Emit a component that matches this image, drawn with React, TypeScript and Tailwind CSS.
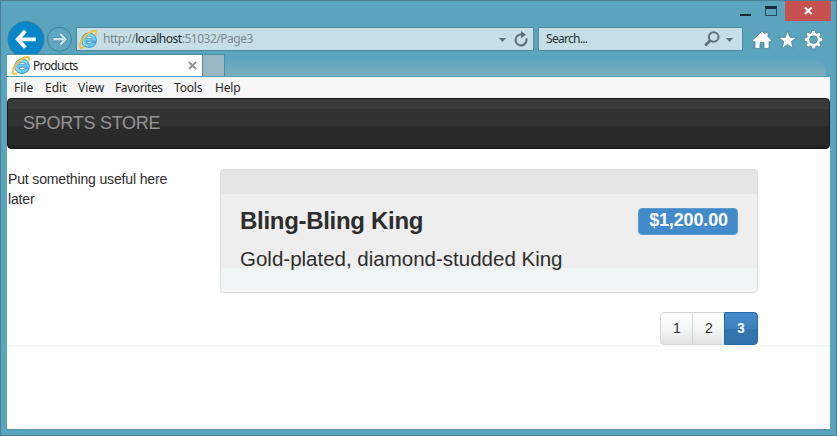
import React from "react";

function IELogo({ className = "" }: { className?: string }) {
  return (
    <svg className={className} width="19" height="19" viewBox="0 0 19 19" fill="none">
      <path d="M17.2 12.4C16.2 15.6 13.4 17.4 10 17.4C5.7 17.4 2.7 14.5 2.7 10.4C2.7 6.3 5.8 3.2 10 3.2C14.5 3.2 17.6 6.3 17.4 11.2H7C7.3 12.9 8.5 13.8 10.2 13.8C11.5 13.8 12.4 13.3 12.9 12.4Z" fill="#6bcaf2" stroke="#318fc4" strokeWidth="0.9" />
      <path d="M7.1 8.5H13C12.7 7.1 11.6 6.3 10.1 6.3C8.5 6.3 7.4 7.1 7.1 8.5Z" fill="#e3f5fc" stroke="#318fc4" strokeWidth="0.6" />
      <path d="M4.4 7.6C5.5 5.6 7.5 4.5 10 4.6C12 4.6 13.8 5.5 14.9 7M4 11C4.3 13.7 6 15.7 8.8 16.1" stroke="#b5e9fb" strokeWidth="0.9" />
      <path d="M4.2 17.3C2.2 18.6.5 17.8.9 15.2C1.5 11.5 5.3 6.2 9.8 3C13.2.6 16.5.2 17.1 1.8C17.4 2.8 17.1 3.6 16.6 4.8" stroke="#f7bf27" strokeWidth="1.8" strokeLinecap="round" />
    </svg>
  );
}

function Caret({ className = "" }: { className?: string }) {
  return (
    <svg className={className} width="7" height="4" viewBox="0 0 7 4">
      <path d="M0 0H7L3.5 4Z" fill="#58727c" />
    </svg>
  );
}

function TitleBar() {
  return (
    <div className="flex h-5 shrink-0 items-start justify-end pr-[5px]">
      <div className="mr-[14px] mt-[13px] h-[2px] w-[11px] bg-[#1c2b31]" />
      <div className="mr-2 mt-[5px] h-[10px] w-3 border border-t-[3px] border-[#2b4854] border-t-[#1c2b31]" />
      <div className="flex h-5 w-[46px] items-center justify-center bg-[#c75050]">
        <svg width="9" height="8" viewBox="0 0 9 8">
          <path d="M1 .5L7.6 7M7.6 .5L1 7" stroke="#fff" strokeWidth="2" />
        </svg>
      </div>
    </div>
  );
}

function Toolbar() {
  return (
    <div className="flex h-[33px] shrink-0 overflow-hidden pl-[6px]">
      <svg className="shrink-0" width="66" height="38" viewBox="0 0 66 38">
        <circle cx="19" cy="18.5" r="18" fill="#0786c9" stroke="#367ea1" strokeWidth="1" />
        <path d="M11 18.3H28.8M18.3 10L10.8 18.3L18.3 26.5" fill="none" stroke="#fff" strokeWidth="3.8" />
        <circle cx="52.4" cy="18.3" r="12" fill="#5fa7c1" stroke="#417f98" strokeWidth="1" />
        <path d="M46.5 18.3H58M53.4 13L58.5 18.3L53.4 23.6" fill="none" stroke="#487f96" strokeWidth="3.8" />
        <path d="M46.5 18.3H58M53.4 13L58.5 18.3L53.4 23.6" fill="none" stroke="#c9e1ea" strokeWidth="2.4" />
      </svg>
      <div className="ml-[3px] mt-[6px] flex h-6 w-[458px] shrink-0 items-center border border-[#50889d] bg-[#c6dfe6] pl-[2px] pr-[5px]">
        <IELogo />
        <span className="ml-[5px] whitespace-nowrap text-[12px] leading-6 tracking-[-0.48px] text-[#79898f]">http://<span className="text-[#17282e]">localhost</span>:51032/Page3</span>
        <Caret className="ml-auto mt-px" />
        <svg className="ml-[8px]" width="14" height="16" viewBox="0 0 14 16">
          <path d="M12.3 7.4A5.5 5.5 0 1 1 7.5 3.5" fill="none" stroke="#5c7179" strokeWidth="2.1" />
          <path d="M7 0L12 3.7L7 7.2Z" fill="#5c7179" />
        </svg>
      </div>
      <div className="ml-1 mt-[6px] flex h-6 w-[205px] shrink-0 items-center border border-[#50889d] bg-[#c6dfe6] pl-[7px] pr-[9px]">
        <span className="text-[12px] leading-6 tracking-[-0.7px] text-[#203037]">Search...</span>
        <svg className="ml-auto" width="16" height="16" viewBox="0 0 16 16" fill="none" stroke="#5c7179">
          <circle cx="9.7" cy="6" r="4.8" strokeWidth="2" />
          <path d="M6.2 9.5L1.2 14.5" strokeWidth="2.8" />
        </svg>
        <Caret className="ml-[6px] mt-px" />
      </div>
      <svg className="ml-[9px] mt-[9px] shrink-0" width="72" height="20" viewBox="0 0 72 20">
        <path d="M10 1L13 3.8V2.3H16V6.7L19.3 10.1V11.7H17V18.4H12V12.5H8V18.4H3V11.7H.7V10.1Z" fill="#fff" stroke="#4b8197" strokeWidth="0.8" />
        <path d="M35.6 .8L38 7.2L44.6 7.5L39.4 11.6L41.2 18.3L35.6 14.4L30 18.3L31.8 11.6L26.6 7.5L33.2 7.2Z" fill="#fff" stroke="#4b8197" strokeWidth="0.8" />
        <g transform="translate(61.5 9.6)">
          <path d="M-1.8 -9.2H1.8L2.2 -6.8L3.4 -6.2L5.5 -7.6L7.6 -5.5L6.2 -3.4L6.8 -2L9.2 -1.8V1.8L6.8 2L6.2 3.4L7.6 5.5L5.5 7.6L3.4 6.2L2.2 6.8L1.8 9.2H-1.8L-2.2 6.8L-3.4 6.2L-5.5 7.6L-7.6 5.5L-6.2 3.4L-6.8 2L-9.2 1.8V-1.8L-6.8 -2L-6.2 -3.4L-7.6 -5.5L-5.5 -7.6L-3.4 -6.2L-2.2 -6.8Z" fill="#fff" stroke="#4b8197" strokeWidth="0.8" />
          <circle r="3.9" fill="#5aa4be" stroke="#4b8197" strokeWidth="0.8" />
        </g>
      </svg>
    </div>
  );
}

function TabStrip() {
  return (
    <div className="flex h-[22px] shrink-0 pl-[6px] pr-[6px]">
      <div className="flex w-[195px] items-center border-t border-[#4f8ca4] bg-white pl-[5px] pr-[5px]">
        <IELogo />
        <span className="ml-[2px] text-[12px] leading-[22px] tracking-[-0.65px] text-[#222]">Products</span>
        <svg className="ml-auto" width="9" height="9" viewBox="0 0 9 9">
          <path d="M1 1L8 8M8 1L1 8" stroke="#929292" strokeWidth="1.9" />
        </svg>
      </div>
      <div className="w-[23px] border border-b-0 border-[#4f8ca4] bg-[#9ab7c4]" />
      <div className="mt-[5px] mr-1 flex-1 rounded-tr-[14px] bg-linear-to-b from-[#5ea4be] to-[#7baebf]" />
    </div>
  );
}

const menuItems = [
  { label: "File", style: "w-[31px]" },
  { label: "Edit", style: "w-[33px]" },
  { label: "View", style: "w-[37px]" },
  { label: "Favorites", style: "w-[59px] tracking-[-0.4px]" },
  { label: "Tools", style: "w-[41px] tracking-[-0.2px]" },
  { label: "Help", style: "w-[30px] tracking-[-0.2px]" },
];

function MenuBar() {
  return (
    <div className="flex h-[22px] shrink-0 border-t border-[#519ab4] bg-[#f6f6f6] pl-[7px] text-[12px] leading-[22px] text-[#262626]">
      {menuItems.map((item) => (
        <span key={item.label} className={`whitespace-nowrap ${item.style}`}>{item.label}</span>
      ))}
    </div>
  );
}

function Page() {
  return (
    <div className="min-h-0 flex-1 bg-white font-['Liberation_Sans',Arial,sans-serif] text-[#2d2d2d]">
      <header className="h-[51px] rounded-[4px] border border-[#191919] bg-[linear-gradient(to_bottom,#3a3a3a_0_10px,#323232_10px_27px,#292929_27px_46px,#222_46px)] pl-[15px] text-[18px] leading-[48px] tracking-[-0.25px] text-[#949494]">
        SPORTS STORE
      </header>
      <div className="flex h-[198px] border-b-2 border-[#f6f8f8] pt-5">
        <aside className="w-[213px] pl-px pr-8 text-[14px] leading-5 tracking-[-0.14px]">Put something useful here later</aside>
        <main className="w-[538px]">
          <section className="flex h-[124px] justify-between rounded-[4px] border border-[#dcdddd] bg-[linear-gradient(to_bottom,#e4e4e4_0_24px,#eee_24px_98px,#f0f5f5_98px_118px,#f5f5f5_118px)] px-[19px]">
            <div>
              <h3 className="mt-[37px] text-[24px] leading-[28px] font-bold tracking-[-0.3px]">Bling-Bling King</h3>
              <p className="mt-[12px] text-[20.5px] leading-[23px]">Gold-plated, diamond-studded King</p>
            </div>
            <span className="mt-[38px] h-[27px] w-[100px] rounded-[4px] border border-[#619cce] bg-[#428bca] pl-px text-center text-[18px] leading-[23px] font-bold tracking-[-0.15px] text-white">$1,200.00</span>
          </section>
          <nav className="mt-[19px] flex h-[33px] justify-end text-center text-[14px] leading-[31px]">
            <a className="w-[33px] rounded-l-[4px] border border-[#d5d5d5] bg-linear-to-b from-white via-[#f5f7f7] to-[#e2e2e2] pl-px">1</a>
            <a className="w-[31px] border-y border-[#d5d5d5] bg-linear-to-b from-white via-[#f5f7f7] to-[#e2e2e2] pl-px">2</a>
            <a className="w-[34px] rounded-r-[4px] border border-[#286aa5] bg-[linear-gradient(to_bottom,#428bca_0,#3d82bd_50%,#3475af_51%,#3072ac)] font-bold text-white">3</a>
          </nav>
        </main>
      </div>
    </div>
  );
}

export default function App() {
  return (
    <div className="flex h-[436px] w-[837px] flex-col overflow-hidden border border-[#4b8094] bg-[#5ba4be] pb-[5px] font-['Noto_Sans','Open_Sans',sans-serif]">
      <TitleBar />
      <Toolbar />
      <TabStrip />
      <div className="mx-[6px] flex min-h-0 flex-1 flex-col border-b border-[#5290a8]">
        <MenuBar />
        <Page />
      </div>
    </div>
  );
}
